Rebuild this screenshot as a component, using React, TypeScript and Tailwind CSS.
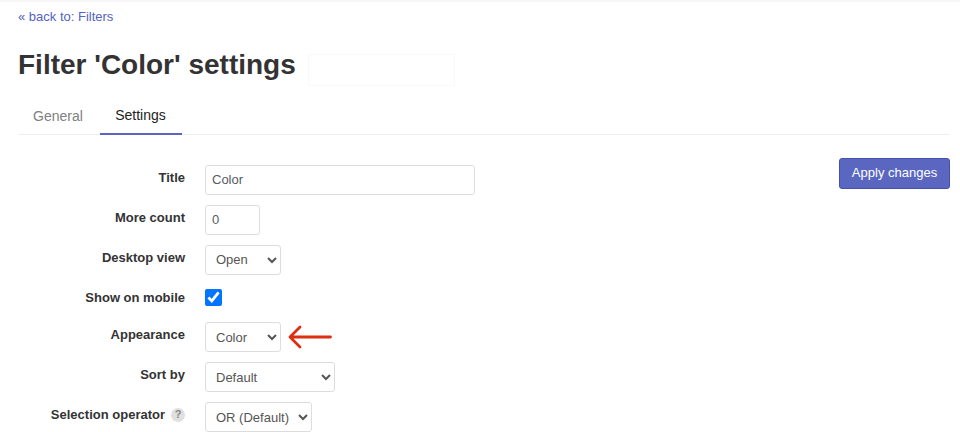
const font = { fontFamily: '"Liberation Sans", Arial, sans-serif' };

const inputCls =
  "h-[30px] rounded-[3px] border border-[#ddd] bg-white px-[6px] pb-[1px] text-[13px] text-[#555b66] outline-none";
const selectCls =
  "h-[30px] rounded-[3px] border border-[#ddd] bg-white pl-[6px] text-[13px] text-[#555] outline-none";

function Row({
  label,
  help,
  children,
  short,
}: {
  label: string;
  help?: boolean;
  children: React.ReactNode;
  short?: boolean;
}) {
  return (
    <div className={`flex gap-5 ${short ? "h-[27px]" : "h-[30px]"}`}>
      <div className="flex w-[167px] shrink-0 justify-end gap-[6px] pt-[5px] text-[13px] leading-[16px] font-bold text-[#333]">
        <span>{label}</span>
        {help && (
          <span className="mt-[1px] flex h-[14px] w-[14px] items-center justify-center rounded-full bg-[#e0e0e0] pb-[1px] text-[11px] leading-none font-bold text-[#888]">
            ?
          </span>
        )}
      </div>
      {children}
    </div>
  );
}

export default function App() {
  return (
    <div className="h-[432px] overflow-hidden border-t-2 border-[#f6f6f6] bg-white pr-[10px] pl-[18px]" style={font}>
      <a href="#" className="mt-[7px] block text-[13px] leading-[15px] text-[#5562c1]">
        « back to: Filters
      </a>

      <div className="mt-[15px] flex items-start">
        <h1 className="pt-[1px] text-[28px] leading-[50px] font-bold text-[#333]">Filter 'Color' settings</h1>
        <div className="mt-[15px] ml-[12px] h-[32px] w-[147px] border border-[#fdf8f8]"></div>
      </div>

      <div className="mt-[4px] flex h-[41px] border-b border-[#eee] text-[14px]">
        <div className="flex h-[41px] w-[82px] items-center justify-center pt-[3px] pr-[2px] text-[#808080]">
          General
        </div>
        <div className="flex h-[41px] w-[82px] items-center justify-center border-b-2 border-[#5a66c0] pt-[4px] pr-[1px] text-[#222]">
          Settings
        </div>
      </div>

      <div className="mt-[30px] flex justify-between">
        <div className="flex flex-col gap-[10px]">
          <Row label="Title">
            <input className={`${inputCls} w-[270px]`} defaultValue="Color" />
          </Row>
          <Row label="More count">
            <input className={`${inputCls} w-[55px]`} defaultValue="0" />
          </Row>
          <Row label="Desktop view">
            <select className={`${selectCls} w-[76px] pb-[1px]`}>
              <option>Open</option>
            </select>
          </Row>
          <Row label="Show on mobile" short>
            <input type="checkbox" defaultChecked className="mt-[4px] h-[17px] w-[17px]" />
          </Row>
          <Row label="Appearance">
            <select className={`${selectCls} w-[76px]`}>
              <option>Color</option>
            </select>
            <svg width="44" height="24" viewBox="0 0 44 24" className="mt-[3px] -ml-[13px]" fill="none">
              <path
                d="M42.5 12H2M12 2L2 12l10 10"
                stroke="#dc2f12"
                strokeWidth="2.8"
                strokeLinecap="round"
                strokeLinejoin="round"
              />
            </svg>
          </Row>
          <Row label="Sort by">
            <select className={`${selectCls} w-[130px]`}>
              <option>Default</option>
            </select>
          </Row>
          <Row label="Selection operator" help>
            <select className={`${selectCls} w-[107px]`}>
              <option>OR (Default)</option>
            </select>
          </Row>
        </div>
        <button className="-mt-[7px] h-[31px] w-[111px] rounded-[3px] border border-[#4450ae] bg-[#5a66c0] pb-[2px] text-[13px] text-white">
          Apply changes
        </button>
      </div>
    </div>
  );
}
